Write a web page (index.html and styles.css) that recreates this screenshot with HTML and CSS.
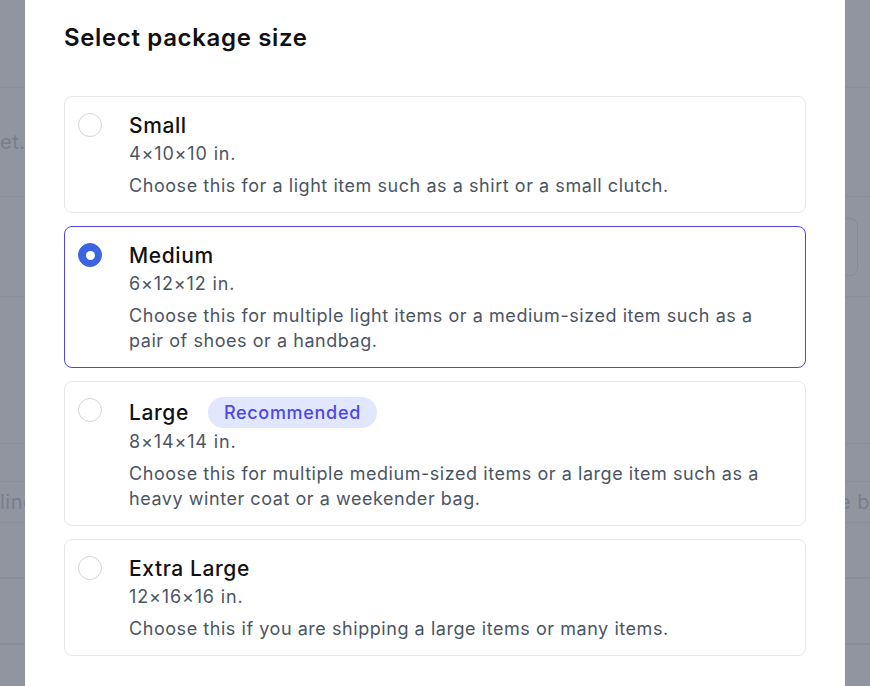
FILE: index.html
```html
<!DOCTYPE html>
<html lang="en">
<head>
<meta charset="utf-8">
<title>Select package size</title>
<link rel="stylesheet" href="styles.css">
</head>
<body>
<div class="page">
  <div class="row r1"></div>
  <div class="row r2"><span class="ghost-text left">et.</span></div>
  <div class="row r3"><div class="ghost-box"></div></div>
  <div class="row r4"></div>
  <div class="row r5"></div>
  <div class="row r6"><span class="ghost-text left">line</span><span class="ghost-text right">e b</span></div>
  <div class="row r7"></div>
  <div class="row r8"></div>
</div>

<div class="overlay"></div>

<div class="modal" role="dialog" aria-labelledby="dlg-title">
  <h2 class="modal-title" id="dlg-title">Select package size</h2>
  <div class="options">
    <label class="option">
      <span class="radio"></span>
      <div class="option-body">
        <div class="option-head"><span class="option-title">Small</span></div>
        <div class="option-dims">4×10×10 in.</div>
        <p class="option-desc">Choose this for a light item such as a shirt or a small clutch.</p>
      </div>
    </label>
    <label class="option selected">
      <span class="radio checked"><span class="dot"></span></span>
      <div class="option-body">
        <div class="option-head"><span class="option-title">Medium</span></div>
        <div class="option-dims">6×12×12 in.</div>
        <p class="option-desc">Choose this for multiple light items or a medium-sized item such as a pair of shoes or a handbag.</p>
      </div>
    </label>
    <label class="option">
      <span class="radio"></span>
      <div class="option-body">
        <div class="option-head"><span class="option-title">Large</span><span class="badge">Recommended</span></div>
        <div class="option-dims">8×14×14 in.</div>
        <p class="option-desc">Choose this for multiple medium-sized items or a large item such as a heavy winter coat or a weekender bag.</p>
      </div>
    </label>
    <label class="option">
      <span class="radio"></span>
      <div class="option-body">
        <div class="option-head"><span class="option-title">Extra Large</span></div>
        <div class="option-dims">12×16×16 in.</div>
        <p class="option-desc">Choose this if you are shipping a large items or many items.</p>
      </div>
    </label>
  </div>
</div>
</body>
</html>
```

FILE: styles.css
```css
* { box-sizing: border-box; }

html, body {
  margin: 0;
  padding: 0;
  height: 100%;
  overflow: hidden;
}

body {
  font-family: Inter, "Noto Sans", "Liberation Sans", sans-serif;
  background: #ffffff;
}

/* underlying page */
.page {
  display: flex;
  flex-direction: column;
}

.row {
  display: flex;
  align-items: center;
  border-bottom: 1px solid #e5e7eb;
}

.r1 { height: 88px; }
.r2 { height: 109px; }
.r3 { height: 100px; justify-content: flex-end; padding-right: 12px; }
.r4 { height: 147px; }
.r5 { height: 38px; }
.r6 { height: 41px; justify-content: space-between; }
.r7 { height: 56px; border-bottom: 2px solid #e5e7eb; }
.r8 { height: 66px; border-bottom: 2px solid #e5e7eb; }

.ghost-text {
  font-size: 20px;
  color: #9ca3af;
  white-space: nowrap;
  letter-spacing: 0.5px;
}

.r6 .ghost-text.right { margin-right: 0; }

.ghost-box {
  width: 220px;
  height: 58px;
  border: 1px solid #d1d5db;
  border-radius: 8px;
}

.overlay {
  position: fixed;
  inset: 0;
  background: rgba(107, 114, 128, 0.75);
}

/* modal */
.modal {
  position: fixed;
  top: 0;
  bottom: 0;
  left: 25px;
  width: 820px;
  background: #ffffff;
  padding: 22px 39px;
  overflow: hidden;
}

.modal-title {
  margin: 0;
  font-size: 24px;
  line-height: 32px;
  font-weight: 600;
  letter-spacing: 0.65px;
  color: #111111;
}

.options {
  margin-top: 42px;
  display: flex;
  flex-direction: column;
  gap: 13px;
}

.option {
  display: flex;
  align-items: flex-start;
  gap: 27px;
  padding: 15px 16px 14px 13px;
  border: 1px solid #e5e7eb;
  border-radius: 8px;
  background: #ffffff;
}

.option.selected {
  border-color: #4f46e5;
}

.radio {
  flex: none;
  width: 24px;
  height: 24px;
  margin-top: 1px;
  border-radius: 50%;
  border: 1px solid #d1d5db;
  background: #ffffff;
  display: flex;
  align-items: center;
  justify-content: center;
}

.radio.checked {
  background: #3b64df;
  border-color: #3b64df;
}

.radio .dot {
  width: 9px;
  height: 9px;
  border-radius: 50%;
  background: #ffffff;
}

.option-body {
  flex: 1;
  min-width: 0;
}

.option-head {
  display: flex;
  align-items: center;
  gap: 19px;
  min-height: 28px;
}

.option-title {
  font-size: 21px;
  line-height: 28px;
  font-weight: 500;
  letter-spacing: 0.6px;
  color: #111111;
}

.badge {
  font-size: 18px;
  line-height: 31px;
  font-weight: 500;
  letter-spacing: 0.7px;
  color: #4f46e5;
  background: #e0e7ff;
  border-radius: 9999px;
  padding: 0 16px;
}

.option-dims {
  font-size: 18px;
  line-height: 28px;
  letter-spacing: 0.85px;
  color: #4b5563;
}

.option-desc {
  margin: 5px 0 0;
  font-size: 18px;
  line-height: 25px;
  letter-spacing: 0.55px;
  color: #4b5563;
}
```
